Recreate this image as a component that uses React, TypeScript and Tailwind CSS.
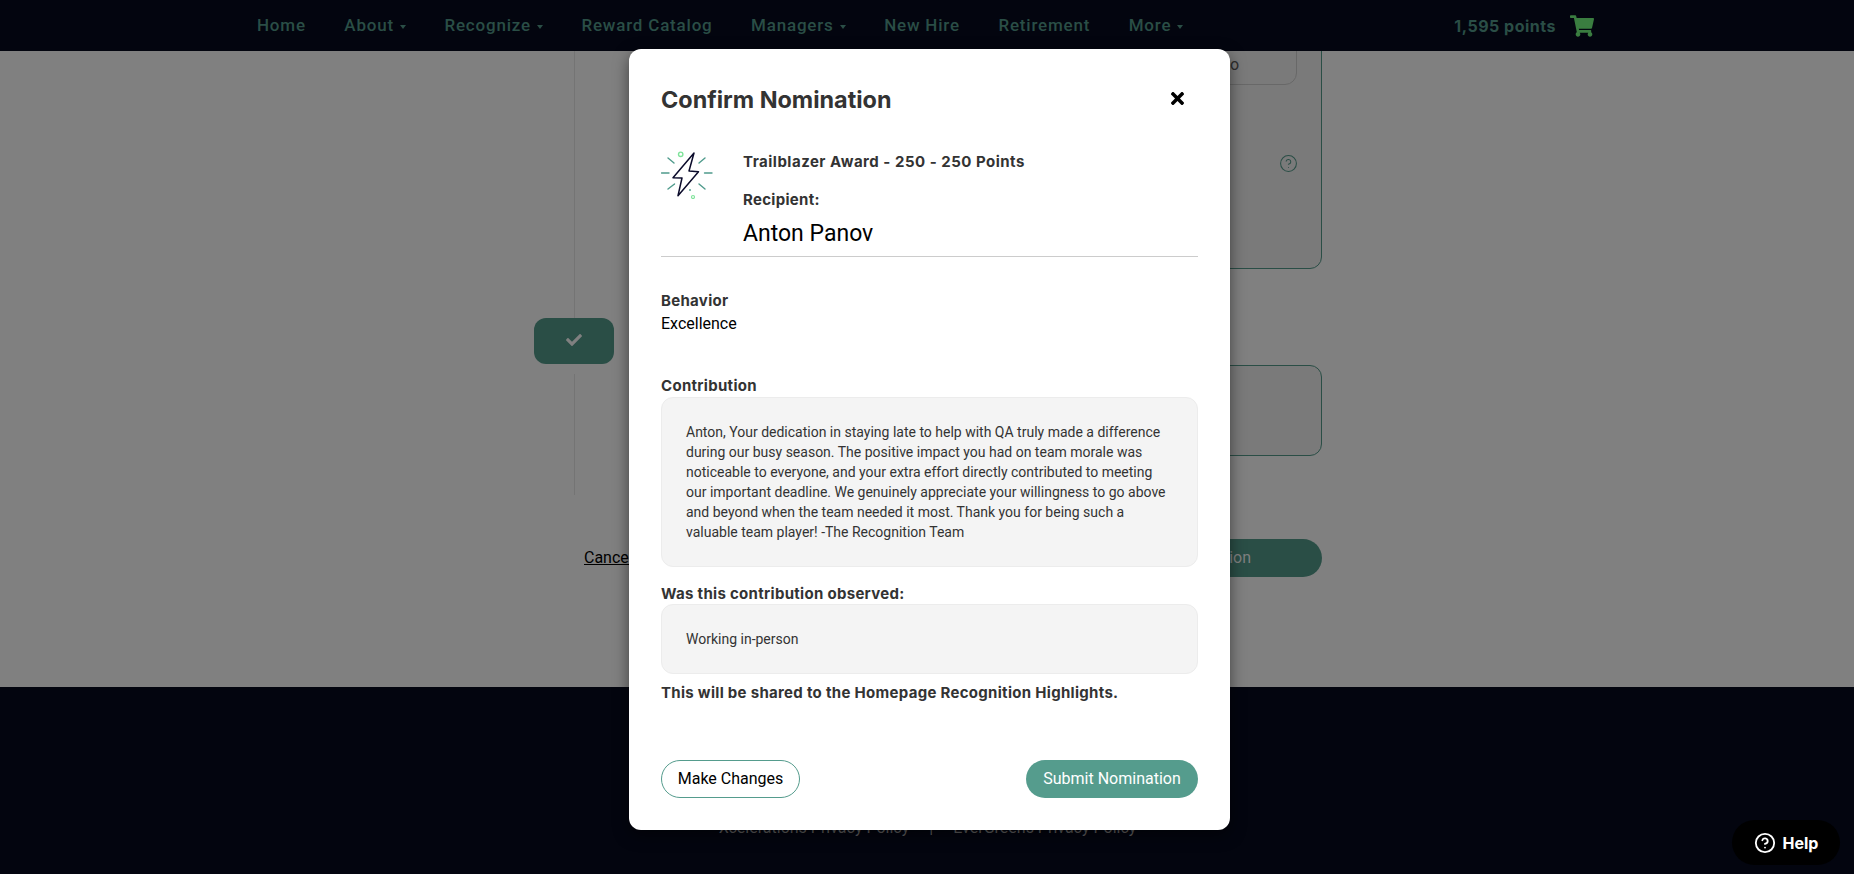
import { CircleHelp } from 'lucide-react';
import { FaCheck, FaShoppingCart, FaTimes } from 'react-icons/fa';

const NAV_ITEMS = [
  { label: 'Home' },
  { label: 'About', caret: true },
  { label: 'Recognize', caret: true },
  { label: 'Reward Catalog' },
  { label: 'Managers', caret: true },
  { label: 'New Hire' },
  { label: 'Retirement' },
  { label: 'More', caret: true },
];

const HEADING_FONT = "font-['Inter',sans-serif]";
const BODY_FONT = "font-['Roboto',sans-serif]";
const LABEL = `text-[15px] font-bold leading-[22px] tracking-[0.3px] text-[#333333] ${HEADING_FONT}`;

function Header() {
  return (
    <header className={`flex h-[51px] items-center bg-[#03050f] pl-[257px] pr-[260px] ${BODY_FONT}`}>
      <nav className="flex items-center gap-[38.5px] pt-[1px] text-[17px] font-medium tracking-[0.8px] text-[#2a4e46]">
        {NAV_ITEMS.map((item) => (
          <span key={item.label} className="flex items-center gap-[6px] whitespace-nowrap">
            {item.label}
            {item.caret && (
              <span className="mt-[2px] h-0 w-0 border-x-[3.5px] border-t-[4px] border-x-transparent border-t-[#2a4e46]" />
            )}
          </span>
        ))}
      </nav>
      <div className="ml-auto flex items-center gap-[14px]">
        <span className={`text-[16px] font-bold tracking-[0.5px] text-[#2a4e46] ${HEADING_FONT}`}>1,595 points</span>
        <FaShoppingCart className="h-[22px] w-[24px] text-[#3a7d40]" />
      </div>
    </header>
  );
}

// The page behind the dialog, mostly hidden by it
function BackgroundPage() {
  return (
    <main className={`h-[636px] overflow-hidden bg-[#808080] pl-[534px] ${BODY_FONT}`}>
      <div className="flex h-[444px] w-[788px]">
        <div className="flex w-[80px] flex-col items-center">
          <div className="h-[267px] w-px bg-[#747474]" />
          <div className="flex h-[46px] w-[80px] shrink-0 items-center justify-center rounded-xl bg-[#2a4e46]">
            <FaCheck className="-mt-[2px] h-[16px] w-[16px] text-[#808080]" />
          </div>
          <div className="mt-[10px] h-[121px] w-px bg-[#747474]" />
        </div>
        <div className="ml-[30px] flex flex-1 flex-col">
          <div className="-mt-[20px] flex h-[238px] shrink-0 flex-col rounded-b-xl border border-[#2a4e46] bg-[#7a7a7a] pr-[24px]">
            <div className="flex h-[53px] shrink-0 items-end justify-end rounded-b-xl border border-[#686868] pb-[7px] pr-[57px] text-[16px] text-[#2e2e2e]">
              Demo
            </div>
            <CircleHelp className="ml-auto -mr-[1px] mt-[69px] h-[19px] w-[19px] text-[#2a4e46]" strokeWidth={1.3} />
          </div>
          <div className="mt-[96px] h-[91px] shrink-0 rounded-xl border border-[#2a4e46] bg-[#7a7a7a]" />
        </div>
      </div>
      <div className="mt-[44px] flex w-[788px] items-center justify-between">
        <span className="ml-[50px] text-[16px] text-black underline">Cancel</span>
        <span className="flex h-[38px] w-[200px] items-center justify-end whitespace-nowrap rounded-full bg-[#2a4e46] pr-[71px] text-[16px] text-[#808080]">
          Continue to Confirmation
        </span>
      </div>
    </main>
  );
}

function Footer() {
  return (
    <footer className={`flex h-[187px] items-start justify-center gap-[20px] bg-[#03050f] pl-[1px] pt-[131px] text-[16px] leading-[20px] text-[#5f5f5f] ${BODY_FONT}`}>
      <span>Xcelerations Privacy Policy</span>
      <span>|</span>
      <span>EverGreens Privacy Policy</span>
    </footer>
  );
}

function BoltIcon() {
  return (
    <svg width="52" height="50" viewBox="0 0 52 50" fill="none" className="shrink-0">
      <path d="M33 4 L28 22 L37.5 22.7 L17 46.7 L21 29 L12 28.7 Z" stroke="#0b0b2b" strokeWidth="1.5" strokeLinejoin="round" />
      <g stroke="#4f9b8c" strokeWidth="1.4" strokeLinecap="round">
        <path d="M0.5 24 H8" />
        <path d="M43.5 24 H51" />
        <path d="M7 9 L13 14" />
        <path d="M38 14 L44 9" />
        <path d="M7 40 L13.5 35" />
        <path d="M38 35 L44 40" />
      </g>
      <circle cx="19.7" cy="5.3" r="2.2" stroke="#7fe39a" strokeWidth="1.4" />
      <circle cx="32" cy="48" r="1.5" stroke="#7fe39a" strokeWidth="1.2" />
      <circle cx="29" cy="41" r="0.9" fill="#4f9b8c" />
    </svg>
  );
}

function ConfirmDialog() {
  return (
    <div className={`absolute left-[629px] top-[49px] h-[781px] w-[601px] rounded-xl bg-white px-[32px] shadow-[0_5px_15px_rgba(0,0,0,0.5)] ${BODY_FONT}`}>
      <div className="flex h-[70px] items-end justify-between pb-[1px]">
        <h2 className={`text-[23.4px] font-bold leading-[36px] text-[#333333] ${HEADING_FONT}`}>Confirm Nomination</h2>
        <FaTimes className="mb-[10px] mr-[12px] h-[19px] w-[17px] text-black" />
      </div>

      <div className="mt-[30px] flex h-[108px] border-b border-[#cccccc]">
        <BoltIcon />
        <div className="ml-[30px] pt-[2px]">
          <div className={`${LABEL} tracking-[0.5px]`}>Trailblazer Award - 250 - 250 Points</div>
          <div className={`mt-[16px] ${LABEL}`}>Recipient:</div>
          <div className="mt-[8px] text-[23px] leading-[30px] text-black">Anton Panov</div>
        </div>
      </div>

      <div className={`mt-[33px] ${LABEL}`}>Behavior</div>
      <div className="text-[16px] leading-[24px] text-black">Excellence</div>

      <div className={`mt-[39px] ${LABEL}`}>Contribution</div>
      <div className="h-[170px] rounded-xl border border-[#ececec] bg-[#f4f4f4] px-[24px] pt-[24px] text-[14px] leading-[20px] text-[#333333]">
        Anton, Your dedication in staying late to help with QA truly made a difference during our busy season. The
        positive impact you had on team morale was noticeable to everyone, and your extra effort directly contributed
        to meeting our important deadline. We genuinely appreciate your willingness to go above and beyond when the
        team needed it most. Thank you for being such a valuable team player! -The Recognition Team
      </div>

      <div className={`mt-[16px] !leading-[21px] ${LABEL}`}>Was this contribution observed:</div>
      <div className="flex h-[70px] items-center rounded-xl border border-[#ececec] bg-[#f4f4f4] px-[24px] text-[14px] text-[#333333]">
        Working in-person
      </div>
      <div className={`mt-[8px] ${LABEL}`}>This will be shared to the Homepage Recognition Highlights.</div>

      <div className="mt-[56px] flex items-center justify-between text-[16px]">
        <button className="h-[38px] w-[139px] rounded-full border border-[#559c8d] bg-white text-black">Make Changes</button>
        <button className="h-[38px] w-[172px] rounded-full bg-[#559c8d] text-white">Submit Nomination</button>
      </div>
    </div>
  );
}

export default function App() {
  return (
    <div className="relative h-[874px] w-[1854px] overflow-hidden">
      <Header />
      <BackgroundPage />
      <Footer />
      <ConfirmDialog />
      <div className={`absolute left-[1732px] top-[820px] flex h-[45px] w-[108px] items-center justify-center gap-[7px] rounded-full bg-black text-[16px] font-bold text-white ${HEADING_FONT}`}>
        <CircleHelp className="h-[22px] w-[22px]" strokeWidth={2} />
        Help
      </div>
    </div>
  );
}
